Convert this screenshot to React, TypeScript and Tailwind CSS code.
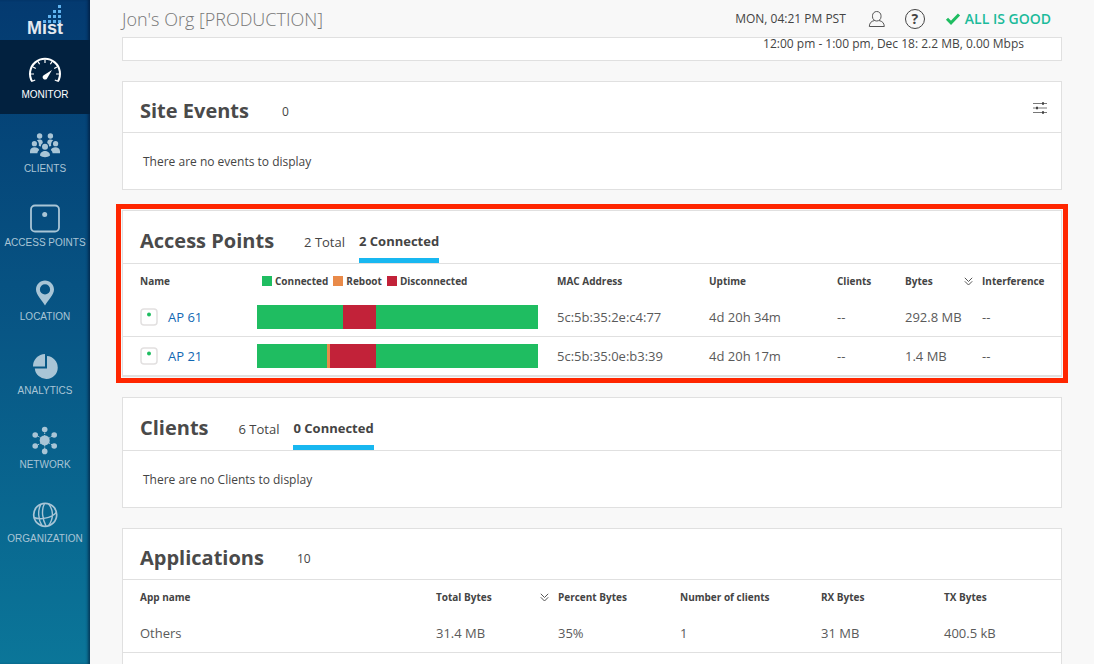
import { ReactNode } from "react";

interface NavItem {
    label: string;
    icon: ReactNode;
    active?: boolean;
}

interface Segment {
    status: "connected" | "reboot" | "disconnected";
    share: number;
}

interface AccessPoint {
    name: string;
    mac: string;
    uptime: string;
    clients: string;
    bytes: string;
    interference: string;
    timeline: Segment[];
}

const statusColor = {
    connected: "bg-[#1fbd61]",
    reboot: "bg-[#e98a49]",
    disconnected: "bg-[#c22239]",
};

const accessPoints: AccessPoint[] = [
    {
        name: "AP 61",
        mac: "5c:5b:35:2e:c4:77",
        uptime: "4d 20h 34m",
        clients: "--",
        bytes: "292.8 MB",
        interference: "--",
        timeline: [
            { status: "connected", share: 86 },
            { status: "disconnected", share: 33 },
            { status: "connected", share: 162 },
        ],
    },
    {
        name: "AP 21",
        mac: "5c:5b:35:0e:b3:39",
        uptime: "4d 20h 17m",
        clients: "--",
        bytes: "1.4 MB",
        interference: "--",
        timeline: [
            { status: "connected", share: 70 },
            { status: "reboot", share: 3 },
            { status: "disconnected", share: 46 },
            { status: "connected", share: 162 },
        ],
    },
];

const apps = [
    { name: "Others", total: "31.4 MB", percent: "35%", clients: "1", rx: "31 MB", tx: "400.5 kB" },
];

function GaugeIcon() {
    return (
        <svg width="34" height="34" viewBox="0 0 34 34" fill="none" stroke="currentColor">
            <path d="M4.2 27.6A15 15 0 1 1 29.8 27.6" strokeWidth="2" />
            <path d="M17 5.5v3.5M10 7.5l1.6 2.8M24 7.5l-1.6 2.8M5 13l2.8 1.5M29 13l-2.8 1.5M2.5 20h3.5M31.5 20H28M4.2 27.2l3-1.2M29.8 27.2l-3-1.2" strokeWidth="1.2" />
            <path d="M24 16l-4.8 8.2a2.4 2.4 0 1 1-3.5-3z" fill="currentColor" stroke="none" />
        </svg>
    );
}

function PeopleIcon() {
    return (
        <svg width="34" height="34" viewBox="0 0 34 34" fill="currentColor">
            <circle cx="11.6" cy="8" r="2.7" />
            <circle cx="22.4" cy="8" r="2.7" />
            <path d="M8.8 12.2c1.8-1.2 4.6-1 5.6.6l.4 2.2c-1.4.8-2 2-1.8 3.6l-2.2-.6c.5-2.4-.3-4.5-2-5.8zM25.2 12.2c-1.8-1.2-4.6-1-5.6.6l-.4 2.2c1.4.8 2 2 1.8 3.6l2.2-.6c-.5-2.4.3-4.5 2-5.8z" />
            <circle cx="6.4" cy="15.7" r="2.6" />
            <circle cx="27.6" cy="15.7" r="2.6" />
            <path d="M2 25.2v-2c0-5 8-5 9.2-1.2-1 .8-1.6 1.8-1.8 3.2zM32 25.2v-2c0-5-8-5-9.2-1.2 1 .8 1.6 1.8 1.8 3.2z" />
            <circle cx="17" cy="18.8" r="3" />
            <path d="M12 27.6c0-6.2 10-6.2 10 0-2.5 2.2-7.5 2.2-10 0z" />
        </svg>
    );
}

function ApIcon() {
    return (
        <svg width="34" height="34" viewBox="0 0 34 34" fill="none">
            <rect x="3" y="3.5" width="28" height="26" rx="4" stroke="currentColor" strokeWidth="1.8" />
            <circle cx="16.7" cy="12.5" r="2.5" fill="currentColor" />
        </svg>
    );
}

function PinIcon() {
    return (
        <svg width="34" height="34" viewBox="0 0 34 34" fill="currentColor" fillRule="evenodd">
            <path d="M17 4.5c-5 0-9 4-9 9 0 5.5 6 10.5 9 16 3-5.5 9-10.5 9-16 0-5-4-9-9-9zm0 3.8a5.1 5.1 0 1 1 0 10.2 5.1 5.1 0 0 1 0-10.2z" />
        </svg>
    );
}

function PieIcon() {
    return (
        <svg width="34" height="34" viewBox="0 0 34 34" fill="currentColor">
            <path d="M17 4v12.5H5A12.2 12.2 0 0 1 17 4z" />
            <path d="M19 6a11.5 11.5 0 1 1-12.2 12.5H19z" />
        </svg>
    );
}

function NetworkIcon() {
    return (
        <svg width="34" height="34" viewBox="0 0 34 34" fill="currentColor">
            <path d="M16.7 6v22M8 11l18 11M26 11L8 22" stroke="currentColor" strokeWidth="1" strokeDasharray="1.5 1" />
            <circle cx="16.7" cy="16.4" r="5" />
            <circle cx="16.7" cy="5.5" r="2.8" />
            <circle cx="16.7" cy="27.4" r="2.8" />
            <circle cx="7.2" cy="11" r="2.8" />
            <circle cx="26.2" cy="11" r="2.8" />
            <circle cx="7.2" cy="22" r="2.8" />
            <circle cx="26.2" cy="22" r="2.8" />
        </svg>
    );
}

function GlobeIcon() {
    return (
        <svg width="34" height="34" viewBox="0 0 34 34" fill="none" stroke="currentColor" strokeWidth="1.7">
            <circle cx="17.2" cy="16.8" r="11.5" />
            <path d="M13 6.2c-3.5 6-3 15.500 1.200 21.800M20.500 5.800c5 6 5.500 14.500 0 22M5.800 19.500c6 2.500 17 1 22.500-5M16.500 5.500c-3.500 7-2 16 1.500 22.500" strokeWidth="1.400" />
        </svg>
    );
}

const navItems: NavItem[] = [
    { label: "MONITOR", icon: <GaugeIcon />, active: true },
    { label: "CLIENTS", icon: <PeopleIcon /> },
    { label: "ACCESS POINTS", icon: <ApIcon /> },
    { label: "LOCATION", icon: <PinIcon /> },
    { label: "ANALYTICS", icon: <PieIcon /> },
    { label: "NETWORK", icon: <NetworkIcon /> },
    { label: "ORGANIZATION", icon: <GlobeIcon /> },
];

function SortIcon() {
    return (
        <svg width="9" height="9" viewBox="0 0 9 9" fill="none" stroke="#555" strokeWidth="1">
            <path d="M.8.8l3.7 3.7L8.2.8M.8 4.3L4.5 8l3.7-3.7" />
        </svg>
    );
}

function Sidebar() {
    return (
        <nav className="w-[90px] shrink-0 bg-linear-to-b from-[#043a70] via-[#085685] to-[#0b7699] shadow-[inset_-3px_0_3px_-1px_rgba(0,20,50,0.6)]">
            <a href="#" className="relative flex h-10 items-end justify-center font-['Liberation_Sans'] text-lg leading-6 font-bold text-[#e3e9f0]">
                Mist
                <svg className="absolute top-[5px] left-[43px]" width="18" height="18" viewBox="0 0 18 18" fill="#5fb2ee">
                    <path d="M15 0h3v3h-3zM10 5h3v3h-3zM15 5h3v3h-3zM5 10h3v3H5zM10 10h3v3h-3zM15 10h3v3h-3zM0 15h3v3H0zM5 15h3v3H5zM10 15h3v3h-3zM15 15h3v3h-3z" />
                </svg>
            </a>
            {navItems.map((item) => (
                <a
                    key={item.label}
                    href="#"
                    className={
                        item.active
                            ? "flex h-[74px] flex-col items-center bg-[#02213f] pt-[14px] text-white"
                            : "flex h-[74px] flex-col items-center pt-[14px] text-[#a9c5d6]"
                    }
                >
                    {item.icon}
                    <span className="font-['Liberation_Sans'] text-[10px] leading-[14px] whitespace-nowrap">{item.label}</span>
                </a>
            ))}
        </nav>
    );
}

function TopBar() {
    return (
        <header className="flex h-[37px] shrink-0 items-center justify-between pr-[11px]">
            <h1 className="text-lg font-light text-[#777]">Jon's Org [PRODUCTION]</h1>
            <div className="flex items-center pt-px">
                <span className="text-xs text-[#444]">MON, 04:21 PM PST</span>
                <button aria-label="Account" className="ml-[22px]">
                    <svg width="18" height="18" viewBox="0 0 18 18" fill="none" stroke="#555" strokeWidth="1">
                        <rect x="4.5" y="1.5" width="8.5" height="9.5" rx="4.2" />
                        <path d="M6.5 10.5c-3.5.8-5 2.5-5.2 6h15c-.2-3.5-1.8-5.2-5.3-6" />
                    </svg>
                </button>
                <button aria-label="Help" className="ml-[19px] flex size-5 items-center justify-center rounded-full border border-[#444] text-sm font-bold text-[#444]">
                    ?
                </button>
                <svg className="ml-5" width="16" height="12" viewBox="0 0 16 12" fill="none" stroke="#1fbd61" strokeWidth="3">
                    <path d="M2 5.8l4 4L14 1.5" />
                </svg>
                <span className="ml-1 text-sm font-semibold text-[#1cbb9b]">ALL IS GOOD</span>
            </div>
        </header>
    );
}

function Card({ children }: { children: ReactNode }) {
    return <section className="shrink-0 border border-[#e0e0e0] bg-white">{children}</section>;
}

function CountHeader({ title, count, children }: { title: string; count: string; children?: ReactNode }) {
    return (
        <div className="flex h-[51px] items-center border-b border-[#e0e0e0] px-[17px] pt-2">
            <h2 className="text-xl font-bold text-[#4a4a4a]">{title}</h2>
            <span className="ml-[33px] pt-0.5 text-xs">{count}</span>
            {children}
        </div>
    );
}

function TabHeader({ title, total, connected }: { title: string; total: string; connected: string }) {
    return (
        <div className="flex h-[53px] items-stretch border-b border-[#e0e0e0] px-[17px]">
            <h2 className="flex items-center pt-2 text-xl font-bold text-[#4a4a4a]">{title}</h2>
            <button className="ml-[30px] pt-3 text-[13px]">{total}</button>
            <button className="ml-3.5 border-b-5 border-[#18b7f0] pt-3.5 text-[13px] font-bold">{connected}</button>
        </div>
    );
}

function EmptyMessage({ text }: { text: string }) {
    return <p className="px-5 pt-[21px] pb-[19px] text-xs">{text}</p>;
}

function Legend() {
    return (
        <div className="flex items-center gap-[5px] pl-[5px]">
            <span className="flex items-center gap-[3px]"><i className="size-2.5 bg-[#1fbd61]" />Connected</span>
            <span className="flex items-center gap-[3px]"><i className="size-2.5 bg-[#e98a49]" />Reboot</span>
            <span className="flex items-center gap-[3px]"><i className="size-2.5 bg-[#c22239]" />Disconnected</span>
        </div>
    );
}

function AccessPointsTable() {
    return (
        <table className="w-full table-fixed border-separate border-spacing-0 text-left">
            <colgroup>
                <col className="w-[134px]" />
                <col className="w-[300px]" />
                <col className="w-[152px]" />
                <col className="w-[128px]" />
                <col className="w-[68px]" />
                <col className="w-[77px]" />
                <col className="w-[79px]" />
            </colgroup>
            <thead>
                <tr className="h-[34px] text-[10px] whitespace-nowrap">
                    <th className="pl-[17px]">Name</th>
                    <th><Legend /></th>
                    <th>MAC Address</th>
                    <th>Uptime</th>
                    <th>Clients</th>
                    <th>
                        <div className="flex items-center justify-between pr-[9px]">Bytes <SortIcon /></div>
                    </th>
                    <th>Interference</th>
                </tr>
            </thead>
            <tbody className="text-[13px] text-[#5a5a5a]">
                {accessPoints.map((ap) => (
                    <tr key={ap.name} className="h-[39px] *:border-b *:border-[#e0e0e0]">
                        <td className="pl-[17px]">
                            <a href="#" className="flex items-center gap-2.5 text-[#1268b3]">
                                <svg width="18" height="18" viewBox="0 0 18 18" fill="white">
                                    <rect x="1" y="1" width="16" height="16" rx="3" stroke="#e2e0e0" strokeWidth="1.5" />
                                    <circle cx="9" cy="6.5" r="2" fill="#1fbd61" />
                                </svg>
                                <span className="pt-px">{ap.name}</span>
                            </a>
                        </td>
                        <td className="pr-[19px]">
                            <div className="flex h-6">
                                {ap.timeline.map((seg, i) => (
                                    <div key={i} className={statusColor[seg.status]} style={{ flexGrow: seg.share }} />
                                ))}
                            </div>
                        </td>
                        <td className="pt-0.5">{ap.mac}</td>
                        <td className="pt-0.5">{ap.uptime}</td>
                        <td className="pt-0.5">{ap.clients}</td>
                        <td className="pt-0.5">{ap.bytes}</td>
                        <td className="pt-0.5">{ap.interference}</td>
                    </tr>
                ))}
            </tbody>
        </table>
    );
}

function ApplicationsTable() {
    return (
        <table className="w-full table-fixed border-separate border-spacing-0 text-left">
            <colgroup>
                <col className="w-[313px]" />
                <col className="w-[122px]" />
                <col className="w-[122px]" />
                <col className="w-[141px]" />
                <col className="w-[123px]" />
                <col className="w-[117px]" />
            </colgroup>
            <thead>
                <tr className="h-[34px] text-[10px] whitespace-nowrap">
                    <th className="pl-[17px]">App name</th>
                    <th>
                        <div className="flex items-center justify-between pr-[9px]">Total Bytes <SortIcon /></div>
                    </th>
                    <th>Percent Bytes</th>
                    <th>Number of clients</th>
                    <th>RX Bytes</th>
                    <th>TX Bytes</th>
                </tr>
            </thead>
            <tbody className="text-[13px] text-[#5a5a5a]">
                {apps.map((app) => (
                    <tr key={app.name} className="h-[39px] *:border-b *:border-[#e0e0e0] *:pt-0.5">
                        <td className="pl-[17px]">{app.name}</td>
                        <td>{app.total}</td>
                        <td>{app.percent}</td>
                        <td>{app.clients}</td>
                        <td>{app.rx}</td>
                        <td>{app.tx}</td>
                    </tr>
                ))}
                <tr className="h-[39px]">
                    <td colSpan={6}></td>
                </tr>
            </tbody>
        </table>
    );
}

export default function App() {
    return (
        <div className="flex h-screen overflow-hidden bg-[#f8f8f8] font-['Open_Sans',sans-serif] text-[#444]">
            <Sidebar />
            <main className="flex min-w-0 flex-1 flex-col px-8">
                <TopBar />
                <div className="flex flex-col gap-5">
                    <Card>
                        <p className="h-[22px] pr-[37px] text-right text-xs leading-3">12:00 pm - 1:00 pm, Dec 18: 2.2 MB, 0.00 Mbps</p>
                    </Card>
                    <Card>
                        <CountHeader title="Site Events" count="0">
                            <button aria-label="Filter events" className="-mt-1.5 -mr-[3px] ml-auto">
                                <svg width="14" height="12" viewBox="0 0 14 12" stroke="#777" strokeWidth="1">
                                    <path d="M0 1.5h14M0 6h14M0 10.5h14" />
                                    <path d="M9 1.5h2M3 6h2M9 10.5h2" stroke="#444" strokeWidth="2.5" />
                                </svg>
                            </button>
                        </CountHeader>
                        <EmptyMessage text="There are no events to display" />
                    </Card>
                    <div className="relative">
                        <Card>
                            <TabHeader title="Access Points" total="2 Total" connected="2 Connected" />
                            <AccessPointsTable />
                        </Card>
                        <div className="pointer-events-none absolute -inset-1.5 border-5 border-[#ff2600]" />
                    </div>
                    <Card>
                        <TabHeader title="Clients" total="6 Total" connected="0 Connected" />
                        <EmptyMessage text="There are no Clients to display" />
                    </Card>
                    <Card>
                        <CountHeader title="Applications" count="10" />
                        <ApplicationsTable />
                    </Card>
                </div>
            </main>
        </div>
    );
}
